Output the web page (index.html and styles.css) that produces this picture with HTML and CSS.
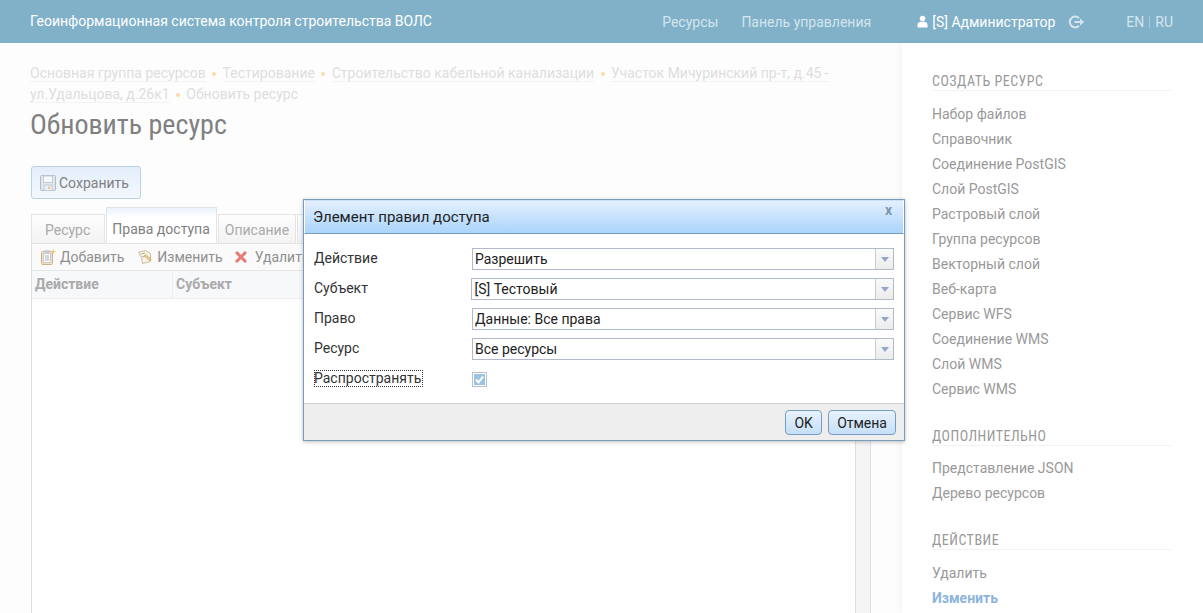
FILE: index.html
```html
<!DOCTYPE html>
<html lang="en">
<head>
    <meta charset="UTF-8">
    <meta name="viewport" content="width=device-width, initial-scale=1.0">
    <title>Обновить ресурс</title>
    <link rel="stylesheet" href="styles.css">
</head>
<body>

    <header class="header">
        <div class="header-title">Геоинформационная система контроля строительства ВОЛС</div>
        <nav class="header-menu">
            <a>Ресурсы</a>
            <a>Панель управления</a>
        </nav>
        <div class="header-user">
            <svg class="user-icon" width="11" height="13" viewBox="0 0 12 13"><circle cx="6" cy="3.2" r="3" fill="#fff"/><path d="M0.500 13v-2.600C0.500 8 2.500 6.800 4 6.800h4c1.500 0 3.500 1.200 3.500 3.600V13z" fill="#fff"/></svg>
            <span>[S] Администратор</span>
            <svg class="logout-icon" width="17" height="14" viewBox="0 0 17 14"><path d="M11 3.200A5.400 5.400 0 1 0 11 10.800" fill="none" stroke="#d5e5ed" stroke-width="2"/><path d="M6.500 7H13" stroke="#d5e5ed" stroke-width="2"/><path d="M12 3.600L16.200 7 12 10.400z" fill="#d5e5ed"/></svg>
        </div>
        <div class="header-lang"><span>EN</span><i></i><span>RU</span></div>
    </header>

    <div class="page">
        <main class="content">
            <div class="breadcrumbs">
                <a>Основная группа ресурсов</a><b></b><a>Тестирование</a><b></b><a>Строительство кабельной канализации</a><b></b><a>Участок Мичуринский пр-т, д.45 - ул.Удальцова, д.26к1</a><b></b><span>Обновить ресурс</span>
            </div>
            <h1>Обновить ресурс</h1>

            <button class="save-btn">
                <svg width="16" height="16" viewBox="0 0 16 16"><rect x="0.500" y="0.500" width="15" height="15" rx="1" fill="#dfe6ee" stroke="#b3bdc9"/><rect x="3.500" y="1" width="9" height="6.500" fill="#f8fafc" stroke="#c2cad4"/><rect x="4" y="10" width="8" height="5.500" fill="#eceff3" stroke="#c2cad4"/><rect x="8" y="11.500" width="2" height="2.500" fill="#e5c98f"/></svg>
                Сохранить
            </button>

            <div class="tabs">
                <div class="tab">Ресурс</div>
                <div class="tab tab-active">Права доступа</div>
                <div class="tab">Описание</div>
                <div class="tab tab-hidden"></div>
            </div>

            <div class="panel-wrap">
                <div class="panel">
                    <div class="toolbar">
                        <span class="tool">
                            <svg width="16" height="16" viewBox="0 0 16 16"><rect x="1.500" y="2.500" width="11" height="13" rx="1" fill="#f3dfc0" stroke="#cdb38c"/><rect x="3.500" y="4.500" width="7" height="9" fill="#fbfbfb" stroke="#c9ced6"/><rect x="4.500" y="1" width="5" height="3" fill="#c7ced8"/><path d="M5 7h4M5 9h4M5 11h4" stroke="#a9b4c2"/><path d="M13.500 0.500v4M11.500 2.500h4" stroke="#f0c56c"/></svg>
                            Добавить
                        </span>
                        <span class="tool">
                            <svg width="16" height="16" viewBox="0 0 16 16"><path d="M1.500 3.500l7-2 5 3v8l-8 2-1-6z" fill="#f7f3e6" stroke="#c9bfa3"/><path d="M4 5l4-1M5 8l3-1" stroke="#b5b09a"/><path d="M7 7l6 5 1.500-1.500-6-5z" fill="#e8c98b" stroke="#c9a765" stroke-width="0.600"/></svg>
                            Изменить
                        </span>
                        <span class="tool tool-delete">
                            <svg width="12" height="12" viewBox="1 1 12 12"><path d="M2 2l10 10M12 2L2 12" stroke="#e87b76" stroke-width="3"/></svg>
                            Удалить
                        </span>
                    </div>
                    <div class="grid-head">
                        <div class="grid-col grid-col-first">Действие</div>
                        <div class="grid-col">Субъект</div>
                    </div>
                </div>
                <div class="panel-side"></div>
            </div>
        </main>

        <aside class="sidebar">
            <h3>Создать ресурс</h3>
            <ul>
                <li>Набор файлов</li>
                <li>Справочник</li>
                <li>Соединение PostGIS</li>
                <li>Слой PostGIS</li>
                <li>Растровый слой</li>
                <li>Группа ресурсов</li>
                <li>Векторный слой</li>
                <li>Веб-карта</li>
                <li>Сервис WFS</li>
                <li>Соединение WMS</li>
                <li>Слой WMS</li>
                <li>Сервис WMS</li>
            </ul>
            <h3>Дополнительно</h3>
            <ul>
                <li>Представление JSON</li>
                <li>Дерево ресурсов</li>
            </ul>
            <h3>Действие</h3>
            <ul>
                <li>Удалить</li>
                <li class="current">Изменить</li>
            </ul>
        </aside>
    </div>

    <!-- Dialog -->
    <div class="dialog">
        <div class="dialog-title">
            <span>Элемент правил доступа</span>
            <span class="dialog-close">x</span>
        </div>
        <div class="dialog-body">
            <div class="form-row">
                <label>Действие</label>
                <div class="select select-narrow"><span>Разрешить</span><em></em></div>
            </div>
            <div class="form-row">
                <label>Субъект</label>
                <div class="select"><span>[S] Тестовый</span><em></em></div>
            </div>
            <div class="form-row">
                <label>Право</label>
                <div class="select select-narrow"><span>Данные: Все права</span><em></em></div>
            </div>
            <div class="form-row">
                <label>Ресурс</label>
                <div class="select select-narrow"><span>Все ресурсы</span><em></em></div>
            </div>
            <div class="form-row">
                <label class="focused">Распространять</label>
                <div class="checkbox">
                    <svg width="13" height="13" viewBox="0 0 13 13"><rect x="1" y="1" width="11" height="11" fill="#9cc3e2"/><path d="M3 6.500l2.500 3 4.500-6" fill="none" stroke="#fff" stroke-width="2"/></svg>
                </div>
            </div>
        </div>
        <div class="dialog-footer">
            <button class="dialog-btn">OK</button>
            <button class="dialog-btn">Отмена</button>
        </div>
    </div>

</body>
</html>
```

FILE: styles.css
```css
* {
    box-sizing: border-box;
}
html, body {
    height: 100%;
}
body {
    margin: 0;
    font-family: Roboto, "Liberation Sans", sans-serif;
    font-size: 14px;
    background-color: #fff;
    color: #999;
    overflow: hidden;
}

/* Header */
.header {
    display: flex;
    align-items: center;
    height: 43px;
    padding: 0 30px;
    background-color: #80b1c9;
    color: #fff;
}
.header-title {
    flex: 1;
    padding-bottom: 2px;
}
.header-menu {
    display: flex;
    gap: 23px;
    color: #d5e5ed;
    margin-right: 46px;
}
.header-user {
    display: flex;
    align-items: center;
    margin-right: 41px;
}
.user-icon {
    margin-right: 4px;
}
.logout-icon {
    margin-left: 13px;
}
.header-lang {
    display: flex;
    align-items: center;
    color: #d5e5ed;
}
.header-lang i {
    width: 1px;
    height: 12px;
    margin: 0 5px;
    background-color: #a8cadb;
}

.page {
    display: flex;
    height: calc(100% - 43px);
}

/* Content */
.content {
    flex: 1;
    min-width: 0;
    padding: 20px 0 0 30px;
    background-color: #fdfdfd;
}
.breadcrumbs {
    width: 810px;
    line-height: 21px;
    color: #ddd;
}
.breadcrumbs a {
    border-bottom: 1px solid #f3f3f3;
}
.breadcrumbs b {
    display: inline-block;
    width: 4px;
    height: 4px;
    margin: 0 6.4px;
    border-radius: 50%;
    vertical-align: middle;
    background-color: #fbdca8;
}
h1 {
    margin: 3px 0 25px;
    font-size: 28px;
    font-weight: 400;
    font-stretch: 75%;
    line-height: 33px;
    color: #808080;
}
.save-btn {
    display: flex;
    align-items: center;
    gap: 3px;
    width: 110px;
    height: 33px;
    margin-left: 1px;
    padding: 0 0 0 8px;
    font: inherit;
    color: #808080;
    border: 1px solid #b9d2e6;
    border-radius: 3px;
    background: linear-gradient(#e4eefa, #f4f8fd);
}

/* Tabs */
.tabs {
    display: flex;
    align-items: flex-end;
    gap: 1px;
    height: 36px;
    margin: 8px 0 0 1px;
}
.tab {
    flex: none;
    height: 29px;
    padding: 7px 6px 0;
    color: #aaa;
    border: 1px solid #e4e4e4;
    border-bottom: none;
    background: linear-gradient(#fdfdfd, #f3f3f3);
}
.tab:first-child {
    padding: 7px 14px 0 13px;
}
.tab-active {
    height: 36px;
    padding: 13px 6px 0 5px;
    color: #808080;
    border-top: 1px solid #e4e4e4;
    background: linear-gradient(#eaf3fb, #fff 10px);
}
.tab-hidden {
    width: 30px;
}

/* Grid panel */
.panel-wrap {
    display: flex;
    height: 370px;
    margin-left: 1px;
}
.panel {
    width: 825px;
    border: 1px solid #dde0e3;
    border-top: 1px solid #e4e4e4;
    border-bottom: none;
    background-color: #fff;
}
.panel-side {
    width: 15px;
    border-right: 1px solid #dcdfe8;
    background-color: #f5f5f5;
}
.toolbar {
    display: flex;
    align-items: center;
    gap: 13px;
    height: 27px;
    padding-left: 8px;
    border-bottom: 1px solid #e4e7ea;
    background-color: #fafafa;
    color: #8f8f8f;
}
.tool {
    display: flex;
    align-items: center;
    gap: 4px;
}
.tool-delete svg {
    margin: 0 4px 0 -1px;
}
.grid-head {
    display: flex;
    height: 28px;
    border-bottom: 1px solid #eceff1;
    background-color: #f6f8fa;
    color: #aaa;
    font-weight: 700;
    line-height: 26px;
}
.grid-col {
    padding-left: 3px;
}
.grid-col-first {
    width: 141px;
    border-right: 1px solid #eceff1;
}

/* Sidebar */
.sidebar {
    flex: none;
    width: 301px;
    padding: 22px 31px 0 30px;
    background-color: #fff;
    box-shadow: -2px 0 6px rgba(0, 0, 0, 0.04);
    color: #999;
}
.sidebar h3 {
    margin: 0 0 10.5px;
    height: 26px;
    font-size: 14px;
    font-weight: 400;
    font-stretch: 75%;
    line-height: 32px;
    letter-spacing: 0.5px;
    text-transform: uppercase;
    color: #999;
    border-bottom: 1px solid #f2f2f2;
}
.sidebar ul {
    list-style: none;
    margin: 0 0 18px;
    padding: 0;
}
.sidebar ul:last-child {
    margin-bottom: 0;
}
.sidebar li {
    height: 25px;
    line-height: 25px;
}
.sidebar .current {
    font-weight: 700;
    color: #8cb4dc;
}

/* Dialog */
.dialog {
    position: absolute;
    left: 303px;
    top: 199px;
    width: 602px;
    height: 242px;
    display: flex;
    flex-direction: column;
    border: 1px solid #769dc0;
    background-color: #fff;
    box-shadow: 0 1px 4px rgba(0, 0, 0, 0.25);
    color: #333;
}
.dialog-title {
    display: flex;
    justify-content: space-between;
    height: 34px;
    padding: 7px 11px 0 8px;
    border: 1px solid #fff;
    border-top-color: #c8e0f8;
    border-bottom: 1px solid #769dc0;
    background: linear-gradient(#e3f0fe, #abd4fb);
    color: #222;
    font-size: 15px;
}
.dialog-close {
    font-size: 14px;
    font-weight: 700;
    line-height: 4px;
    color: #7d96b0;
}
.dialog-body {
    flex: 1;
    padding: 14px 10px 0;
}
.form-row {
    display: flex;
    height: 30px;
}
.form-row label {
    width: 158px;
    height: 17px;
    margin-top: 2px;
    line-height: 17px;
}
.form-row .focused {
    width: 109px;
    margin-right: 49px;
    outline: 1px dotted #333;
    outline-offset: -1px;
}
.select {
    display: flex;
    width: 424px;
    height: 22px;
    border: 1px solid #b3b9cc;
    line-height: 20px;
    padding-left: 2px;
    justify-content: space-between;
    color: #222;
}
.select-narrow {
    width: 422px;
}
.select em {
    position: relative;
    width: 18px;
    border-left: 1px solid #c8ccd8;
    background: linear-gradient(#fafafa, #ececec);
}
.select em::after {
    content: "";
    position: absolute;
    left: 5px;
    top: 8px;
    border: 4px solid transparent;
    border-top: 5px solid #93a8c8;
    border-bottom: none;
}
.checkbox {
    width: 15px;
    height: 15px;
    margin-top: 4px;
    border: 1px solid #b3c2d6;
    line-height: 0;
}
.dialog-footer {
    display: flex;
    justify-content: flex-end;
    gap: 6px;
    height: 37px;
    padding: 6px 8px 0 0;
    border-top: 1px solid #cfcfcf;
    background-color: #eee;
}
.dialog-btn {
    min-width: 37px;
    height: 25px;
    padding: 0 8px;
    font: inherit;
    color: #222;
    border: 1px solid #769dc0;
    border-radius: 4px;
    background: linear-gradient(#e8f2fd, #c5dff7);
}
```
